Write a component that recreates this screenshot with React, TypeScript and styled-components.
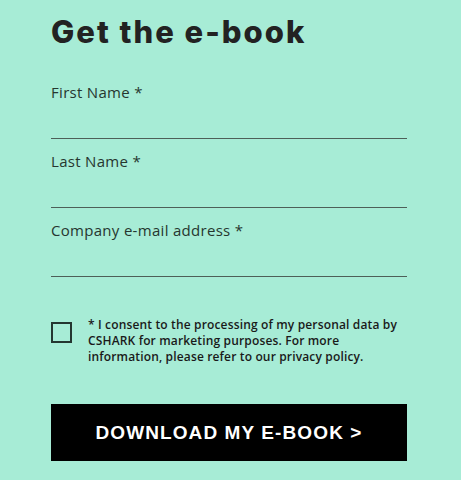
import React from 'react';
import styled, { createGlobalStyle } from 'styled-components';

const GlobalStyle = createGlobalStyle`
  html, body {
    margin: 0;
    padding: 0;
    background: #a7ecd6;
  }
  * {
    box-sizing: border-box;
  }
`;

const Page = styled.div`
  width: 461px;
  min-height: 480px;
  background: #a7ecd6;
  padding: 14px 54px 0 51px;
  font-family: 'Open Sans', 'Liberation Sans', sans-serif;
`;

const Title = styled.h2`
  margin: 0 0 32px;
  font-family: 'Inter', 'Liberation Sans', sans-serif;
  font-size: 31px;
  line-height: 36px;
  font-weight: 800;
  color: #222;
  letter-spacing: 2px;
`;

const Form = styled.form`
  display: flex;
  flex-direction: column;
  gap: 12px;
`;

const Field = styled.label`
  display: flex;
  flex-direction: column;
`;

const Label = styled.span`
  font-size: 15px;
  line-height: 20px;
  color: #26362f;
  letter-spacing: 0.3px;
`;

const Input = styled.input`
  height: 37px;
  border: none;
  border-bottom: 1px solid #4d5f58;
  background: transparent;
  outline: none;
  font: inherit;
  font-size: 15px;
`;

const Consent = styled.div`
  display: flex;
  align-items: flex-start;
  gap: 16px;
  margin-top: 40px;
`;

const Box = styled.span`
  flex: none;
  width: 21px;
  height: 21px;
  margin-top: 5px;
  border: 2px solid #243630;
`;

const ConsentText = styled.p`
  margin: 0;
  font-size: 12px;
  line-height: 16px;
  color: #1a1a1a;
  font-weight: 600;
  letter-spacing: 0.15px;
`;

const Submit = styled.button`
  margin-top: 39px;
  width: 356px;
  height: 57px;
  border: none;
  background: #000;
  color: #fff;
  font-family: 'Liberation Sans', Arial, sans-serif;
  font-weight: 700;
  font-size: 19px;
  letter-spacing: 1.1px;
  cursor: pointer;
`;

const fields = ['First Name *', 'Last Name *', 'Company e-mail address *'];

const App = () => {
  return (
    <Page>
      <GlobalStyle />
      <Title>Get the e-book</Title>
      <Form onSubmit={e => e.preventDefault()}>
        {fields.map(f => (
          <Field key={f}>
            <Label>{f}</Label>
            <Input type="text" />
          </Field>
        ))}
      </Form>
      <Consent>
        <Box />
        <ConsentText>
          * I consent to the processing of my personal data by CSHARK for marketing purposes. For more
          information, please refer to our privacy policy.
        </ConsentText>
      </Consent>
      <Submit type="button">DOWNLOAD MY E-BOOK &gt;</Submit>
    </Page>
  );
};

export default App;
